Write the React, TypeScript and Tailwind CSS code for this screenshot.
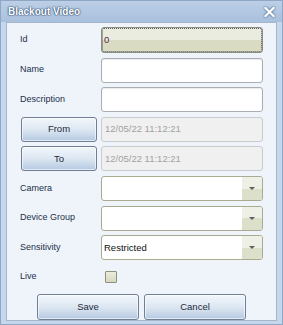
import { ReactNode } from "react";

const labelCls = "w-[81px] shrink-0 text-[9px] text-[#1b2f4a]";
const fontCls = "font-['Liberation_Sans',Arial,sans-serif]";

const Row = ({ children, h = "h-[25px]" }: { children: ReactNode; h?: string }) => (
  <div className={`flex items-center ${h}`}>{children}</div>
);

const TextField = ({ value = "" }: { value?: string }) => (
  <div className="flex h-full flex-1 items-center rounded-[3px] border border-[#a9aeb5] bg-white px-[3px] shadow-[inset_0_1px_1px_rgba(0,0,0,0.08)] text-[9.5px] text-[#222]">
    {value}
  </div>
);

const DateField = ({ value }: { value: string }) => (
  <div className="flex h-full flex-1 items-center rounded-[3px] border border-[#c9cccf] bg-[#f0f0f0] px-[3px] text-[9.5px] text-[#a2a2a2]">
    {value}
  </div>
);

const Combo = ({ value = "" }: { value?: string }) => (
  <div className="flex h-full flex-1 overflow-hidden rounded-[3px] border border-[#a9ab90] bg-white">
    <div className="flex flex-1 items-center px-[2px] text-[9.5px] text-[#111]">{value}</div>
    <div className="flex w-[20px] items-center justify-center bg-gradient-to-b from-[#eef0e5] from-50% to-[#dcdfc9] to-50%">
      <svg width="6" height="3" viewBox="0 0 6 3">
        <path d="M0 0h6L3 3z" fill="#5f5f5f" />
      </svg>
    </div>
  </div>
);

const BlueButton = ({ text, className = "" }: { text: string; className?: string }) => (
  <div
    className={`flex items-center justify-center rounded-[3px] border border-[#707f94] bg-gradient-to-b from-[#f2f6fb] via-[#dde7f2] via-50% to-[#b5c9e2] text-[9.5px] text-[#1d2a3a] shadow-[inset_0_0_0_1px_rgba(255,255,255,0.6)] ${className}`}
  >
    {text}
  </div>
);

export default function App() {
  return (
    <div className={`${fontCls} flex h-[325px] w-[283px] flex-col border border-[#8ea7c4] bg-[#c6d7eb]`}>
      <div className="flex h-[21px] shrink-0 items-center justify-between bg-gradient-to-b from-[#bccfe6] to-[#a9c0dd] pl-[7px] pr-[7px]">
        <span className="text-[10px] font-bold text-white [text-shadow:0_0_2px_#2f4d74,0_0_1px_#2f4d74,0_0_1px_#2f4d74]">
          Blackout Video
        </span>
        <svg width="11" height="10" viewBox="0 0 11 10" className="drop-shadow-[0_0_1px_#2f4d74]">
          <path d="M1.5 1l8 8M9.5 1l-8 8" stroke="#fff" strokeWidth="2.2" strokeLinecap="square" />
        </svg>
      </div>
      <div className="mx-[5px] mb-[6px] flex flex-1 flex-col border border-[#a3b6cd] bg-[#eff4fb] px-[13px] pt-[4px]">
        <div className="flex flex-col gap-[4.6px]">
          <Row h="h-[26px]">
            <div className={labelCls}>Id</div>
            <div className="flex h-full flex-1 items-center rounded-[3px] border border-[#8a8d80] bg-gradient-to-b from-[#e9ecdf] from-50% to-[#d9dcc2] to-50% px-[2px] text-[9.5px] text-[#5b1f46] outline-1 outline-dotted outline-[#5a5a5a] -outline-offset-2">
              0
            </div>
          </Row>
          <Row>
            <div className={labelCls}>Name</div>
            <TextField />
          </Row>
          <Row>
            <div className={labelCls}>Description</div>
            <TextField />
          </Row>
          <Row>
            <div className="w-[81px] shrink-0 self-stretch pr-[4px] pl-px">
              <BlueButton text="From" className="h-full" />
            </div>
            <DateField value="12/05/22 11:12:21" />
          </Row>
          <Row>
            <div className="w-[81px] shrink-0 self-stretch pr-[4px] pl-px">
              <BlueButton text="To" className="h-full" />
            </div>
            <DateField value="12/05/22 11:12:21" />
          </Row>
          <Row>
            <div className={labelCls}>Camera</div>
            <Combo />
          </Row>
          <Row>
            <div className={labelCls}>Device Group</div>
            <Combo />
          </Row>
          <Row>
            <div className={labelCls}>Sensitivity</div>
            <Combo value="Restricted" />
          </Row>
        </div>
        <div className="mt-[7px] flex h-[20px] items-center">
          <div className={labelCls}>Live</div>
          <div className="ml-[4px] h-[12px] w-[12px] rounded-[1px] border border-[#8d8f80] bg-gradient-to-b from-[#ecedde] to-[#d6d9bd]" />
        </div>
        <div className="mt-[7px] flex gap-[5px] pl-[17px]">
          <BlueButton text="Save" className="h-[26px] w-[102px]" />
          <BlueButton text="Cancel" className="h-[26px] w-[102px]" />
        </div>
      </div>
    </div>
  );
}
